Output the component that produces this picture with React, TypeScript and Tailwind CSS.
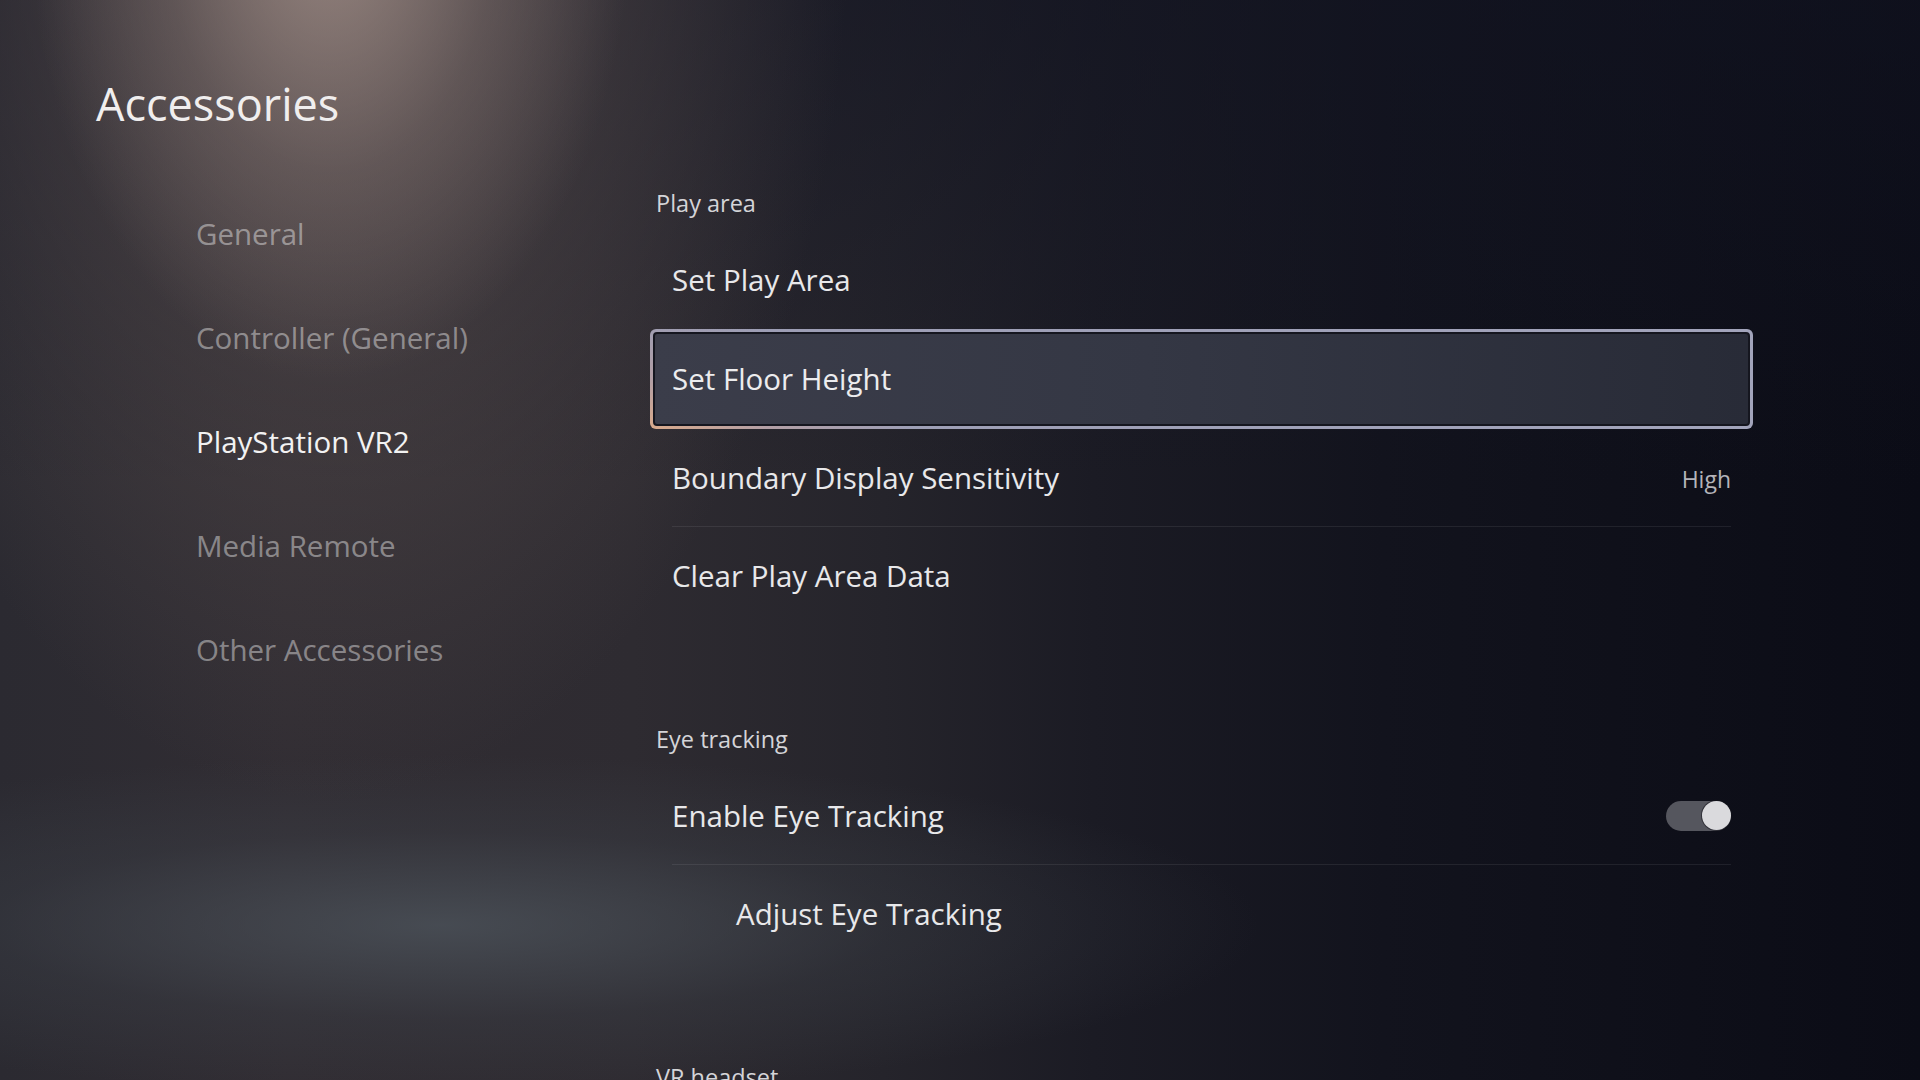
import React from "react";

type Row = {
  label: string;
  value?: string;
  toggle?: boolean;
  focused?: boolean;
  divider?: boolean;
  indent?: boolean;
};

type Section = { title: string; rows: Row[] };

const NAV = ["General", "Controller (General)", "PlayStation VR2", "Media Remote", "Other Accessories"];
const ACTIVE_NAV = "PlayStation VR2";

const SECTIONS: Section[] = [
  {
    title: "Play area",
    rows: [
      { label: "Set Play Area" },
      { label: "Set Floor Height", focused: true },
      { label: "Boundary Display Sensitivity", value: "High", divider: true },
      { label: "Clear Play Area Data" },
    ],
  },
  {
    title: "Eye tracking",
    rows: [
      { label: "Enable Eye Tracking", toggle: true, divider: true },
      { label: "Adjust Eye Tracking", indent: true },
    ],
  },
  { title: "VR headset", rows: [] },
];

function Toggle() {
  // switched on: knob sits at the right end
  return (
    <div className="flex h-[30px] w-[65px] items-center justify-end rounded-full bg-[#55565e]">
      <div className="h-[29px] w-[29px] rounded-full bg-[#dadadd] shadow-[0_0_0_1px_rgba(20,20,28,0.55)]" />
    </div>
  );
}

function SettingRow({ row }: { row: Row }) {
  if (row.focused) {
    return (
      <div className="h-[100px] rounded-[6px] bg-[radial-gradient(ellipse_260px_110px_at_0%_100%,#d9aa8c_0%,rgba(200,160,150,0.5)_45%,transparent_100%),linear-gradient(90deg,#9c9db4,#a2a4bb)] p-[3px]">
        <div className="flex h-full items-center rounded-[4px] border-2 border-[#15161f] bg-[linear-gradient(90deg,#3b3d4a_0%,#343744_45%,#282b37_100%)] pl-[17px] text-[29.5px] leading-none text-[#ececee]">
          {row.label}
        </div>
      </div>
    );
  }

  return (
    <div className="h-[98px] px-[22px]">
      <div
        className={`flex h-full items-center justify-between ${row.divider ? "border-b border-[#ffffff14]" : ""} ${
          row.indent ? "pl-[64px]" : ""
        }`}
      >
        <span className="text-[29.5px] leading-none text-[#e8e8ea]">{row.label}</span>
        {row.value ? <span className="pt-[4px] text-[23px] leading-none text-[#b4b4ba]">{row.value}</span> : null}
        {row.toggle ? <Toggle /> : null}
      </div>
    </div>
  );
}

export default function App() {
  return (
    <div
      className="flex h-[1080px] w-[1920px] overflow-hidden bg-[radial-gradient(ellipse_300px_460px_at_330px_-80px,rgba(172,152,144,0.72)_0%,rgba(150,132,126,0.3)_55%,transparent_100%),radial-gradient(ellipse_520px_900px_at_330px_-100px,rgba(112,98,96,0.8)_0%,rgba(84,75,75,0.45)_55%,transparent_100%),radial-gradient(ellipse_820px_170px_at_440px_925px,rgba(80,88,96,0.7)_0%,rgba(64,70,78,0.3)_55%,transparent_100%),linear-gradient(180deg,rgba(18,20,34,0.55)_0%,rgba(18,20,34,0)_45%),linear-gradient(90deg,#2b2a31_0%,#312d33_15%,#2e2b31_33%,#25242b_46%,#1b1b24_57%,#12131d_72%,#0b0c16_100%)]"
      style={{ fontFamily: '"Open Sans", "Noto Sans", sans-serif' }}
    >
      {/* left column: page title + category list */}
      <div className="w-[650px] shrink-0 pl-[96px] pt-[81px]">
        <div className="text-[45px] leading-[46px] text-[#f0eeee]">Accessories</div>
        <div className="mt-[55px] pl-[100px]">
          {NAV.map((n) => (
            <div
              key={n}
              className={`h-[104px] text-[29.5px] leading-[104px] ${n === ACTIVE_NAV ? "text-[#f2f2f2]" : "text-[#ffffff6b]"}`}
            >
              {n}
            </div>
          ))}
        </div>
      </div>

      {/* right column: settings list */}
      <div className="w-[1103px] shrink-0 pt-[187px]">
        {SECTIONS.map((s, i) => (
          <div key={s.title} className={i > 0 ? "mt-[98px]" : ""}>
            <div className="h-[32px] pl-[6px] text-[23.5px] leading-[32px] text-[#d4d4d8]">{s.title}</div>
            <div className="mt-[12px]">
              {s.rows.map((r) => (
                <SettingRow key={r.label} row={r} />
              ))}
            </div>
          </div>
        ))}
      </div>
    </div>
  );
}
